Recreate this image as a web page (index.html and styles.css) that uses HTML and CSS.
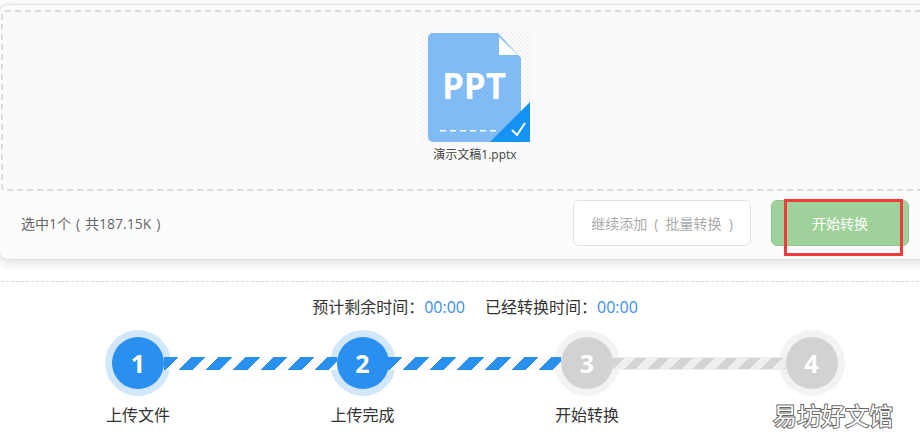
FILE: index.html
```html
<!DOCTYPE html>
<html lang="zh">
<head>
<meta charset="utf-8">
<title>PPT转换</title>
<link rel="stylesheet" href="styles.css">
</head>
<body>
<div class="page">
  <section class="card">
    <div class="drop">
      <div class="file">
        <svg class="file-icon" width="110" height="110" viewBox="0 0 110 110">
          <defs>
            <pattern id="chk" width="4" height="4" patternUnits="userSpaceOnUse">
              <rect width="4" height="4" fill="#f3f3f3"/>
              <rect width="2" height="2" fill="#fcfcfc"/>
              <rect x="2" y="2" width="2" height="2" fill="#fcfcfc"/>
            </pattern>
            <pattern id="tex" width="4" height="4" patternUnits="userSpaceOnUse">
              <rect width="4" height="4" fill="#7cb9f5"/>
              <rect width="2" height="2" fill="#84bdf6"/>
              <rect x="2" y="2" width="2" height="2" fill="#84bdf6"/>
            </pattern>
          </defs>
          <rect width="110" height="110" fill="url(#chk)"/>
          <path d="M13 1H78L101 26V105a5 5 0 0 1-5 5H13a5 5 0 0 1-5-5V6a5 5 0 0 1 5-5z" fill="url(#tex)"/>
          <path d="M79 5L98 23H79z" fill="#fff"/>
          <text class="ppt" x="54" y="67" text-anchor="middle">PPT</text>
          <path d="M20 98.700H80" stroke="#fff" stroke-width="1.500" stroke-dasharray="6 4"/>
          <path d="M110 70V110H70z" fill="#1593f5"/>
          <path d="M92 98l5 5 8-12" fill="none" stroke="#fff" stroke-width="2"/>
        </svg>
        <div class="file-name">演示文稿1.pptx</div>
      </div>
    </div>
    <div class="actions">
      <span class="summary">选中1个 ( 共187.15K )</span>
      <button class="btn btn-add">继续添加 ( 批量转换 )</button>
      <button class="btn btn-start">开始转换</button>
    </div>
  </section>
  <div class="divider"></div>
  <div class="times">
    <span>预计剩余时间：<b>00:00</b></span>
    <span>已经转换时间：<b>00:00</b></span>
  </div>
  <div class="steps">
    <div class="step done"><div class="num">1</div><div class="label">上传文件</div></div>
    <div class="bar done"></div>
    <div class="step done"><div class="num">2</div><div class="label">上传完成</div></div>
    <div class="bar done"></div>
    <div class="step todo"><div class="num">3</div><div class="label">开始转换</div></div>
    <div class="bar todo"></div>
    <div class="step todo"><div class="num">4</div></div>
  </div>
  <div class="highlight"></div>
  <div class="watermark">易坊好文馆</div>
</div>
</body>
</html>
```
FILE: styles.css
```css
* { box-sizing: border-box; }
html, body { margin: 0; padding: 0; }
body {
  width: 920px;
  height: 448px;
  overflow: hidden;
  background: #fff;
  font-family: "Open Sans", "Noto Sans CJK SC", sans-serif;
}
.page { position: relative; width: 920px; height: 448px; overflow: hidden; padding-top: 4px; }
.card {
  width: 962px;
  margin-left: -1px;
  height: 256px;
  background: #fcfcfc;
  border: 1px solid #e0e0e0;
  border-radius: 8px;
  box-shadow: 0 3px 12px rgba(0,0,0,.13);
  padding: 5px 3px 0 1px;
}
.drop {
  height: 181px;
  border: 2px dashed #dcdcdc;
  background: #fafafa;
  border-radius: 4px;
  display: flex;
  padding: 20px 0 0 407px;
}
.file { width: 130px; display: flex; flex-direction: column; align-items: center; }
.file-icon { display: block; flex: none; }
.ppt { font: 700 35px "Open Sans", sans-serif; fill: #fff; }
.file-name { font-size: 12px; line-height: 16px; color: #444; margin-top: 5px; white-space: nowrap; }
.actions { display: flex; align-items: center; padding: 9px 48px 0 20px; }
.summary { font-size: 14px; word-spacing: 1.300px; color: #666; margin-right: auto; }
.btn {
  height: 46px;
  border-radius: 6px;
  font-family: inherit;
  font-size: 14px;
  padding: 0;
}
.btn-add { width: 178px; background: #fff; border: 1px solid #e2e2e2; color: #aaa; margin-right: 20px; word-spacing: 3.500px; }
.btn-start { width: 138px; background: #9ed29a; border: 1px solid #8fc58c; color: #fff; }
.divider { margin-top: 21px; border-top: 1px dashed #d6d6d6; width: 918px; margin-left: 1px; }
.times {
  display: flex;
  justify-content: center;
  gap: 20px;
  margin: 14px 0 0 30px;
  font-size: 16px;
  line-height: 22px;
  color: #333;
}
.times b { font-weight: 400; color: #3a8ef0; }
.steps { display: flex; align-items: flex-start; margin: 12px 0 0 105px; width: 740px; }
.step { position: relative; width: 66px; height: 66px; flex: none; }
.step::before {
  content: "";
  position: absolute;
  inset: 0;
  border-radius: 50%;
  background: #d3e7fb;
}
.step.todo::before { background: #f3f3f3; }
.num {
  position: absolute;
  z-index: 2;
  left: 7px;
  top: 7px;
  width: 52px;
  height: 52px;
  border-radius: 50%;
  background: #2a90f0;
  color: #fff;
  font: 700 25px/52px "Open Sans", sans-serif;
  text-align: center;
}
.step.todo .num { background: #d2d2d2; }
.label {
  position: absolute;
  top: 74px;
  left: -10px;
  width: 86px;
  text-align: center;
  font-size: 16px;
  line-height: 22px;
  color: #333;
  white-space: nowrap;
}
.bar {
  flex: none;
  width: 173px;
  height: 13px;
  margin: 27px -7.250px 0;
  background: repeating-linear-gradient(135deg, #2a90f0 0 10px, #fafafa 10px 19.300px);
  position: relative;
  z-index: 1;
}
.bar.todo {
  background: repeating-linear-gradient(135deg, #d4d4d4 0 8px, #eeeeee 8px 16px);
  background-clip: content-box, border-box;
  border-block: 1px solid #eee;
}
.highlight {
  position: absolute;
  left: 784px;
  top: 199px;
  width: 119px;
  height: 57px;
  border: 3px solid #f23b3b;
}
.watermark {
  position: absolute;
  left: 773px;
  top: 400px;
  font-size: 24px;
  line-height: 30px;
  font-family: "Noto Sans CJK SC", sans-serif;
  color: #fff;
  -webkit-text-stroke: 2px #666;
  paint-order: stroke fill;
  white-space: nowrap;
}
```
